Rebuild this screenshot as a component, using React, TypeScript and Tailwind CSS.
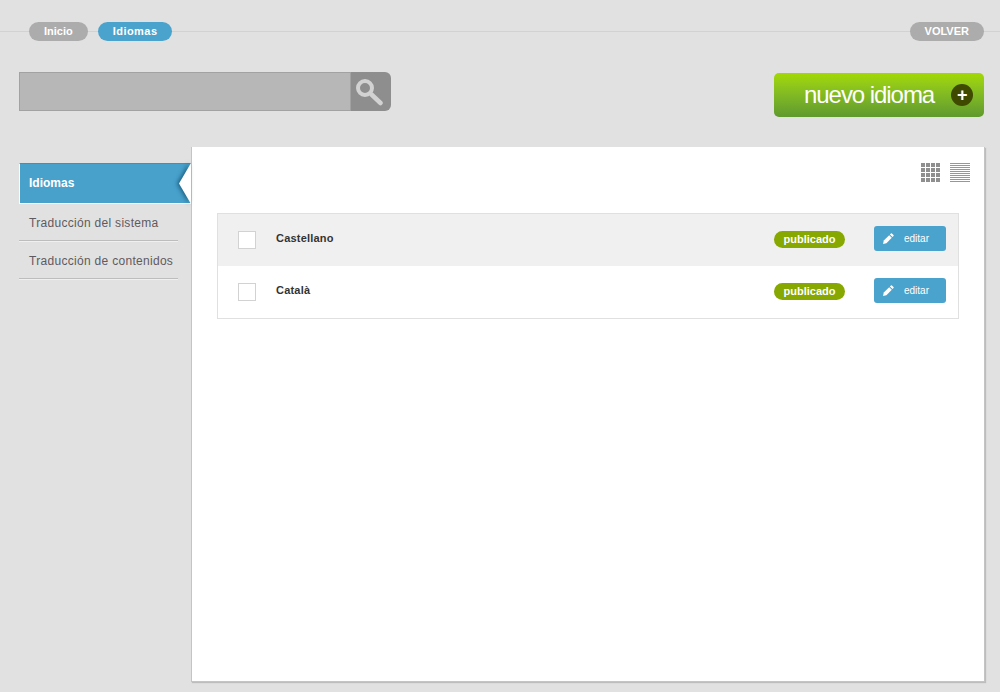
const font = "font-['Liberation_Sans',Arial,sans-serif]"

function Crumb({ label, active }: { label: string; active?: boolean }) {
  return (
    <span
      className={`flex h-[19px] items-center rounded-full px-[15px] text-[11px] font-bold text-white ${
        active ? "bg-[#4aa3cd] tracking-[0.45px]" : "bg-[#acacac]"
      }`}
    >
      {label}
    </span>
  )
}

function SearchIcon() {
  return (
    <svg className="mr-[2px]" width="28" height="28" viewBox="0 0 28 28" fill="none" stroke="#d2d2d2">
      <circle cx="9" cy="10" r="7" strokeWidth="4" />
      <path d="M15.5 16.5l9 8.5" strokeWidth="4.5" strokeLinecap="round" />
    </svg>
  )
}

function GridIcon() {
  return (
    <svg width="19" height="19" viewBox="0 0 19 19" fill="#8f8f8f">
      {[0, 5, 10, 15].flatMap((y) =>
        [0, 5, 10, 15].map((x) => <rect key={`${x}-${y}`} x={x} y={y} width="4" height="4" />)
      )}
    </svg>
  )
}

function ListIcon() {
  return (
    <svg width="20" height="20" viewBox="0 0 20 20" fill="#979797">
      {[0, 2, 4, 6, 8, 10, 12, 14, 16, 18].map((y) => (
        <rect key={y} x="0" y={y} width="20" height="1" />
      ))}
    </svg>
  )
}

function PencilIcon() {
  return (
    <svg width="11" height="11" viewBox="0 0 11 11" fill="white">
      <path d="M0 11l.8-3.4 5.4-5.4 2.6 2.6-5.4 5.4z" />
      <path d="M6.9 1.5l1-1q.5-.5 1 0l1.6 1.6q.5.5 0 1l-1 1z" />
    </svg>
  )
}

function Row({ name, shaded }: { name: string; shaded?: boolean }) {
  return (
    <div className={`flex h-[52px] items-center pl-[20px] pr-[12px] ${shaded ? "bg-[#f1f0f0]" : "bg-white"}`}>
      <span className="h-[18px] w-[18px] border border-[#d2d2d2] bg-white" />
      <span className="mb-[4px] ml-[20px] flex-1 text-[11px] font-bold tracking-[0.2px] text-[#333333]">{name}</span>
      <span className="mb-[2px] flex h-[17px] w-[71px] items-center justify-center rounded-full bg-[#86a800] text-[11px] font-bold text-white">
        publicado
      </span>
      <button className="mb-[4px] ml-[29px] flex h-[25px] w-[72px] items-center rounded-[3px] bg-[#4aa3cd] pl-[9px] text-[10px] text-white">
        <PencilIcon />
        <span className="ml-[10px]">editar</span>
      </button>
    </div>
  )
}

export default function App() {
  return (
    <div className={`${font} h-[692px] w-[1000px] overflow-hidden bg-[#e1e1e1] pt-[22px]`}>
      <header className="flex items-center">
        <div className="h-px w-[29px] bg-[#d2d2d2]" />
        <Crumb label="Inicio" />
        <div className="h-px w-[10px] bg-[#d2d2d2]" />
        <Crumb label="Idiomas" active />
        <div className="h-px flex-1 bg-[#d2d2d2]" />
        <Crumb label="VOLVER" />
        <div className="h-px w-[16px] bg-[#d2d2d2]" />
      </header>

      <div className="mt-[31px] flex items-start justify-between pl-[19px] pr-[16px]">
        <div className="flex h-[39px] w-[372px] overflow-hidden rounded-r-[6px]">
          <div className="flex-1 border border-[#a2a2a2] bg-[#b7b7b7]" />
          <div className="flex w-[40px] items-center justify-center bg-[#8e8e8e]">
            <SearchIcon />
          </div>
        </div>
        <button className="mt-px flex h-[44px] w-[210px] items-center rounded-[5px] bg-gradient-to-b from-[#a3d900] to-[#5f9a2d] pl-[30px] text-[24px] tracking-[-1.05px] text-white">
          nuevo idioma
          <span className="ml-[17px] flex h-[22px] w-[22px] items-center justify-center rounded-full bg-[#3f4a00] text-[18px] font-bold tracking-normal">
            +
          </span>
        </button>
      </div>

      <div className="mt-[30px] flex items-start pl-[19px]">
        <nav className="mt-[16px] w-[172px] text-[12px] tracking-[0.3px] text-[#5f5a5f]">
          <div className="relative flex h-[41px] items-center border border-r-0 border-t-[#7d7d7d] border-b-white border-l-white bg-[#47a1cb] pb-[2px] pl-[9px] font-bold tracking-normal text-white">
            Idiomas
            <span className="absolute top-[-1px] right-0 drop-shadow-[-2px_0_2px_rgba(0,50,80,0.6)]">
              <span className="block h-[41px] w-[12px] bg-white [clip-path:polygon(100%_0,0_50%,100%_100%)]" />
            </span>
          </div>
          <div className="mr-[13px] flex h-[37px] items-center border-b border-[#bdbdbd] pl-[10px] pt-[2px] shadow-[0_1px_0_#f0f0f0]">
            Traducción del sistema
          </div>
          <div className="mr-[13px] flex h-[38px] items-center border-b border-[#bdbdbd] pl-[10px] pt-[2px] shadow-[0_1px_0_#f0f0f0]">
            Traducción de contenidos
          </div>
        </nav>

        <main className="h-[535px] w-[794px] border border-t-0 border-[#c4c4c4] bg-white px-[25px] pt-[16px] shadow-[1px_1px_1px_#bdbdbd]">
          <div className="-mr-[11px] flex justify-end gap-[10px]">
            <GridIcon />
            <ListIcon />
          </div>
          <div className="mt-[30px] border border-[#e0e0e0]">
            <Row name="Castellano" shaded />
            <Row name="Català" />
          </div>
        </main>
      </div>
    </div>
  )
}
